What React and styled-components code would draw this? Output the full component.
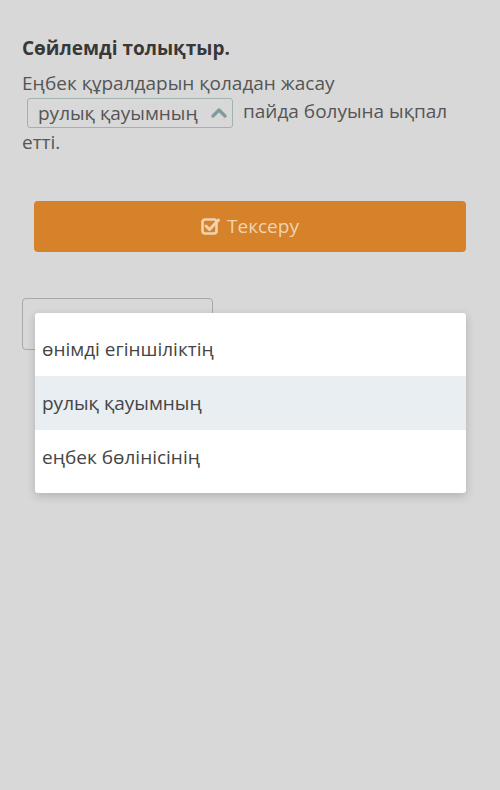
import styled, { createGlobalStyle } from "styled-components";

const GlobalStyle = createGlobalStyle`
  html, body {
    margin: 0;
    padding: 0;
    background: #d8d8d8;
  }
  body {
    font-family: "Open Sans", "Noto Sans", sans-serif;
  }
`;

const Page = styled.div`
  position: relative;
  width: 500px;
  height: 790px;
  box-sizing: border-box;
  padding: 33px 22px 0;
  background: #d8d8d8;
`;

const Title = styled.h2`
  margin: 0;
  font-size: 19px;
  font-weight: 700;
  line-height: 30px;
  color: #383838;
`;

const Sentence = styled.p`
  margin: 6px 0 0;
  font-size: 19px;
  line-height: 28px;
  color: #555;
`;

const Select = styled.span`
  display: inline-flex;
  align-items: center;
  gap: 9px;
  box-sizing: border-box;
  min-width: 206px;
  height: 30px;
  margin: 0 10px 0 5px;
  padding: 0 5px 0 10px;
  border: 1px solid #9fb2ae;
  border-radius: 3px;
  vertical-align: middle;
  white-space: nowrap;
  color: #555;

  svg {
    flex-shrink: 0;
    margin-left: auto;
  }
`;

const Chevron = () => (
  <svg width="16" height="12" viewBox="0 0 16 12">
    <path
      d="M2 9 L8 3 L14 9"
      fill="none"
      stroke="#7f9aa0"
      strokeWidth="3.2"
      strokeLinecap="round"
      strokeLinejoin="round"
    />
  </svg>
);

const CheckButton = styled.button`
  display: flex;
  align-items: center;
  justify-content: center;
  gap: 6px;
  width: 432px;
  height: 51px;
  margin: 45px 0 0 12px;
  border: none;
  border-radius: 4px;
  background: #d5822a;
  color: #f1d3b0;
  font-family: inherit;
  font-size: 19px;
`;

const CheckIcon = () => (
  <svg width="20" height="18" viewBox="0 0 20 18">
    <rect
      x="1.5"
      y="2.5"
      width="14"
      height="14"
      rx="2.5"
      fill="none"
      stroke="#f1d3b0"
      strokeWidth="2.6"
    />
    <path
      d="M5 9 L8.5 12.5 L17.5 3"
      fill="none"
      stroke="#f1d3b0"
      strokeWidth="3"
      strokeLinecap="round"
      strokeLinejoin="round"
    />
  </svg>
);

const GhostBox = styled.div`
  width: 191px;
  height: 52px;
  margin-top: 46px;
  box-sizing: border-box;
  border: 1px solid #a8a8a8;
  border-radius: 4px;
`;

const Menu = styled.ul`
  position: absolute;
  top: 313px;
  left: 35px;
  width: 431px;
  margin: 0;
  padding: 9px 0;
  list-style: none;
  background: #fff;
  border-radius: 3px;
  box-shadow: 0 3px 10px rgba(0, 0, 0, 0.18);
`;

const MenuItem = styled.li`
  display: flex;
  align-items: center;
  height: 54px;
  padding: 0 7px;
  font-size: 19px;
  color: #454545;
  background: ${(props) => (props.$active ? "#e8eef2" : "transparent")};
`;

const options = ["өнімді егіншіліктің", "рулық қауымның", "еңбек бөлінісінің"];

const App = () => {
  return (
    <>
      <GlobalStyle />
      <Page>
        <Title>Сөйлемді толықтыр.</Title>
        <Sentence>
          Еңбек құралдарын қоладан жасау
          <br />
          <Select>
            рулық қауымның
            <Chevron />
          </Select>
          пайда болуына ықпал
          <br />
          етті.
        </Sentence>
        <CheckButton>
          <CheckIcon />
          Тексеру
        </CheckButton>
        <GhostBox />
        <Menu>
          {options.map((option) => (
            <MenuItem key={option} $active={option === "рулық қауымның"}>
              {option}
            </MenuItem>
          ))}
        </Menu>
      </Page>
    </>
  );
};

export default App;
